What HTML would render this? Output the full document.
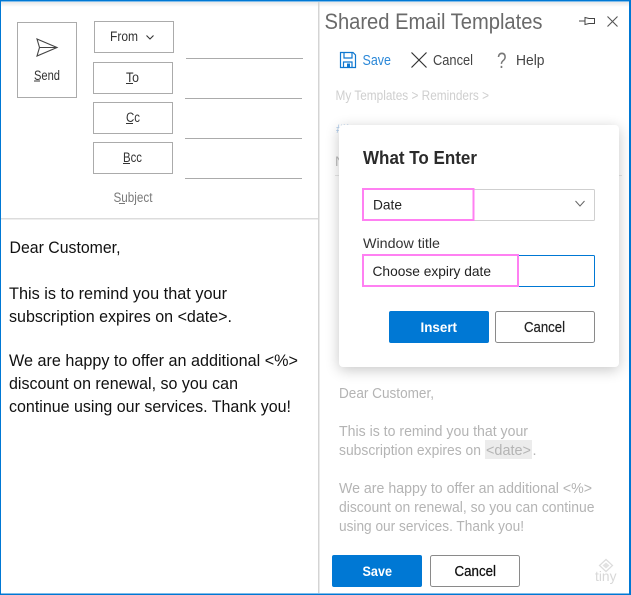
<!DOCTYPE html>
<html><head><meta charset="utf-8"><style>
html,body{margin:0;padding:0;background:#fff;width:631px;height:595px;overflow:hidden}
svg{display:block}
text{font-family:"Liberation Sans",sans-serif;white-space:pre}
</style></head><body>
<svg width="631" height="595" viewBox="0 0 631 595" xmlns="http://www.w3.org/2000/svg">
<defs>
<filter id="sh" x="-20%" y="-20%" width="140%" height="140%"><feGaussianBlur stdDeviation="7"/></filter>
<linearGradient id="tg" x1="0" y1="0" x2="0" y2="1"><stop offset="0" stop-color="#e8e8e8"/><stop offset="1" stop-color="#fff"/></linearGradient>
</defs>
<rect width="631" height="595" fill="#fff"/>
<rect x="1" y="2" width="628" height="5" fill="url(#tg)"/>
<rect x="318" y="2" width="1.500" height="591" fill="#d4d4d4"/>
<rect x="0" y="0" width="631" height="1.500" fill="#0078d4"/>
<rect x="0" y="0" width="1" height="595" fill="#0078d4"/>
<rect x="629" y="0" width="2" height="595" fill="#0078d4"/>
<rect x="0" y="593.500" width="631" height="1.500" fill="#0078d4"/>

<!-- left buttons -->
<g fill="#fff" stroke="#ababab" stroke-width="1">
<rect x="17.500" y="22.500" width="59" height="75"/>
<rect x="94.500" y="21.500" width="79" height="31"/>
<rect x="93.500" y="62.500" width="79" height="31"/>
<rect x="93.500" y="102.500" width="79" height="31"/>
<rect x="93.500" y="142.500" width="79" height="31"/>
</g>
<path d="M37 39L57 47.500L37 56L39.500 47.500ZM39.500 47.500H57" fill="none" stroke="#444" stroke-width="1.100"/>
<g fill="#333" font-size="13.500">
<text x="34" y="80" textLength="26" lengthAdjust="spacingAndGlyphs">Send</text>
<text x="110" y="41" textLength="28" lengthAdjust="spacingAndGlyphs">From</text>
<text x="126" y="82" textLength="13" lengthAdjust="spacingAndGlyphs">To</text>
<text x="126" y="122" textLength="14" lengthAdjust="spacingAndGlyphs">Cc</text>
<text x="123" y="162" textLength="19" lengthAdjust="spacingAndGlyphs">Bcc</text>
</g>
<text x="113.500" y="202" font-size="13.500" fill="#7a7a7a" textLength="39" lengthAdjust="spacingAndGlyphs">Subject</text>
<path d="M34 81H40M126 83.500H133M126 123.500H133M123 163.500H130" stroke="#333" stroke-width="1"/>
<path d="M119 203.500H125" stroke="#777" stroke-width="1"/>
<path d="M146.500 35.500L150 39L153.500 35.500" fill="none" stroke="#333" stroke-width="1.100"/>
<path d="M186 58.500H303M185 98.500H302M185 138.500H302M185 178.500H302" stroke="#ababab" stroke-width="1"/>
<rect x="1" y="218" width="317" height="1.500" fill="#dcdcdc"/>

<!-- left body -->
<g font-size="16.500" fill="#111">
<text x="9.500" y="253" textLength="111" lengthAdjust="spacingAndGlyphs">Dear Customer,</text>
<text x="9" y="299" textLength="218" lengthAdjust="spacingAndGlyphs">This is to remind you that your</text>
<text x="9" y="322" textLength="223" lengthAdjust="spacingAndGlyphs">subscription expires on &lt;date&gt;.</text>
<text x="9" y="366" textLength="289" lengthAdjust="spacingAndGlyphs">We are happy to offer an additional &lt;%&gt;</text>
<text x="9" y="389" textLength="229" lengthAdjust="spacingAndGlyphs">discount on renewal, so you can</text>
<text x="9" y="412" textLength="282" lengthAdjust="spacingAndGlyphs">continue using our services. Thank you!</text>
</g>

<!-- right header -->
<text x="324.500" y="29" font-size="22" fill="#6a6a6a" textLength="218" lengthAdjust="spacingAndGlyphs">Shared Email Templates</text>
<path d="M579 21H585M585 17.500L589 18.500H594.500V23.500H589L585 24.500Z" fill="none" stroke="#444" stroke-width="1"/>
<path d="M607.500 16.500L617.500 26.500M617.500 16.500L607.500 26.500" stroke="#555" stroke-width="1.100"/>
<path d="M340.500 52.500H353L355.500 55V67.500H340.500ZM344 52.500V58H352V52.500M343.500 67.500V62H352V67.500" fill="none" stroke="#0f78d0" stroke-width="1.200"/>
<rect x="347" y="63.500" width="3" height="4" fill="#0f78d0"/>
<text x="362.500" y="65" font-size="14.500" fill="#2b88d8" textLength="28.500" lengthAdjust="spacingAndGlyphs">Save</text>
<path d="M411.500 52.500L426.500 67.500M426.500 52.500L411.500 67.500" stroke="#333" stroke-width="1.200"/>
<text x="433" y="65" font-size="14.500" fill="#444" textLength="40" lengthAdjust="spacingAndGlyphs">Cancel</text>
<text x="497" y="68" font-size="22" fill="#777" textLength="9.500" lengthAdjust="spacingAndGlyphs">?</text>
<text x="516" y="65" font-size="14.500" fill="#444" textLength="28.500" lengthAdjust="spacingAndGlyphs">Help</text>
<text x="335.500" y="100" font-size="13.500" fill="#cfcfcf" textLength="153.500" lengthAdjust="spacingAndGlyphs">My Templates &gt; Reminders &gt;</text>

<!-- behind dialog faint -->
<text x="336" y="133" font-size="12" fill="#a9c6e6">#!!</text>
<text x="335" y="166" font-size="14" fill="#bbb">N</text>
<path d="M335 175.500H622" stroke="#e6e6e6" stroke-width="1"/>

<!-- dialog -->
<rect x="339" y="128" width="280" height="242" rx="4" fill="#000" opacity=".22" filter="url(#sh)"/>
<rect x="339" y="125" width="280" height="242" rx="4" fill="#fff"/>
<text x="363" y="164" font-size="18" font-weight="bold" fill="#2b2b2b" textLength="114" lengthAdjust="spacingAndGlyphs">What To Enter</text>

<rect x="362.500" y="189.500" width="232" height="31" rx="1" fill="#fff" stroke="#cfcfcf"/>
<rect x="363" y="189" width="110.500" height="31" fill="none" stroke="#ff80f2" stroke-width="2"/>
<text x="373" y="209.500" font-size="14" fill="#222" textLength="29" lengthAdjust="spacingAndGlyphs">Date</text>
<path d="M575.500 201L580 206L584.500 201" fill="none" stroke="#666" stroke-width="1"/>

<text x="363" y="248" font-size="14" fill="#333" textLength="77" lengthAdjust="spacingAndGlyphs">Window title</text>
<rect x="362.500" y="255.500" width="232" height="31" rx="1" fill="#fff" stroke="#0078d4"/>
<rect x="363" y="255" width="155" height="31" fill="#fff" stroke="#ff80f2" stroke-width="2"/>
<text x="372.500" y="276" font-size="14" fill="#222" textLength="118.500" lengthAdjust="spacingAndGlyphs">Choose expiry date</text>

<rect x="389" y="311" width="100" height="32" rx="2" fill="#0078d4"/>
<text x="420.500" y="332" font-size="14" font-weight="bold" fill="#fff" textLength="36.500" lengthAdjust="spacingAndGlyphs">Insert</text>
<rect x="495.500" y="311.500" width="99" height="31" rx="2" fill="#fff" stroke="#8a8a8a"/>
<text x="524" y="332" font-size="14.500" fill="#222" stroke="#222" stroke-width=".2" textLength="41" lengthAdjust="spacingAndGlyphs">Cancel</text>

<!-- faded body -->
<rect x="485" y="440" width="47" height="19" fill="#ececec"/>
<g font-size="14.500" fill="#b4b4b4">
<text x="339" y="398" textLength="95" lengthAdjust="spacingAndGlyphs">Dear Customer,</text>
<text x="339" y="436" textLength="189" lengthAdjust="spacingAndGlyphs">This is to remind you that your</text>
<text x="339" y="455" textLength="142" lengthAdjust="spacingAndGlyphs">subscription expires on</text>
<text x="486" y="455" textLength="45" lengthAdjust="spacingAndGlyphs">&lt;date&gt;</text>
<text x="532.500" y="455">.</text>
<text x="339" y="493" textLength="253" lengthAdjust="spacingAndGlyphs">We are happy to offer an additional &lt;%&gt;</text>
<text x="339" y="512" textLength="255.500" lengthAdjust="spacingAndGlyphs">discount on renewal, so you can continue</text>
<text x="339" y="531" textLength="185" lengthAdjust="spacingAndGlyphs">using our services. Thank you!</text>
</g>

<!-- footer -->
<rect x="332" y="555" width="90" height="32" rx="2" fill="#0078d4"/>
<text x="362.500" y="576" font-size="14" font-weight="bold" fill="#fff" textLength="29.500" lengthAdjust="spacingAndGlyphs">Save</text>
<rect x="430.500" y="555.500" width="89" height="31" rx="2" fill="#fff" stroke="#8a8a8a"/>
<text x="454.500" y="576" font-size="14.500" fill="#111" stroke="#111" stroke-width=".25" textLength="41.500" lengthAdjust="spacingAndGlyphs">Cancel</text>
<path d="M606 559.500L612.500 565.500L606 571.500L599.500 565.500Z" fill="none" stroke="#dcdcdc" stroke-width="1.200"/>
<path d="M606 562.500L609.500 565.500L606 568.500L602.500 565.500Z" fill="#e2e2e2"/>
<text x="595" y="581" font-size="14" fill="#d8d8d8" textLength="21.500" lengthAdjust="spacingAndGlyphs">tiny</text>
</svg>
</body></html>
